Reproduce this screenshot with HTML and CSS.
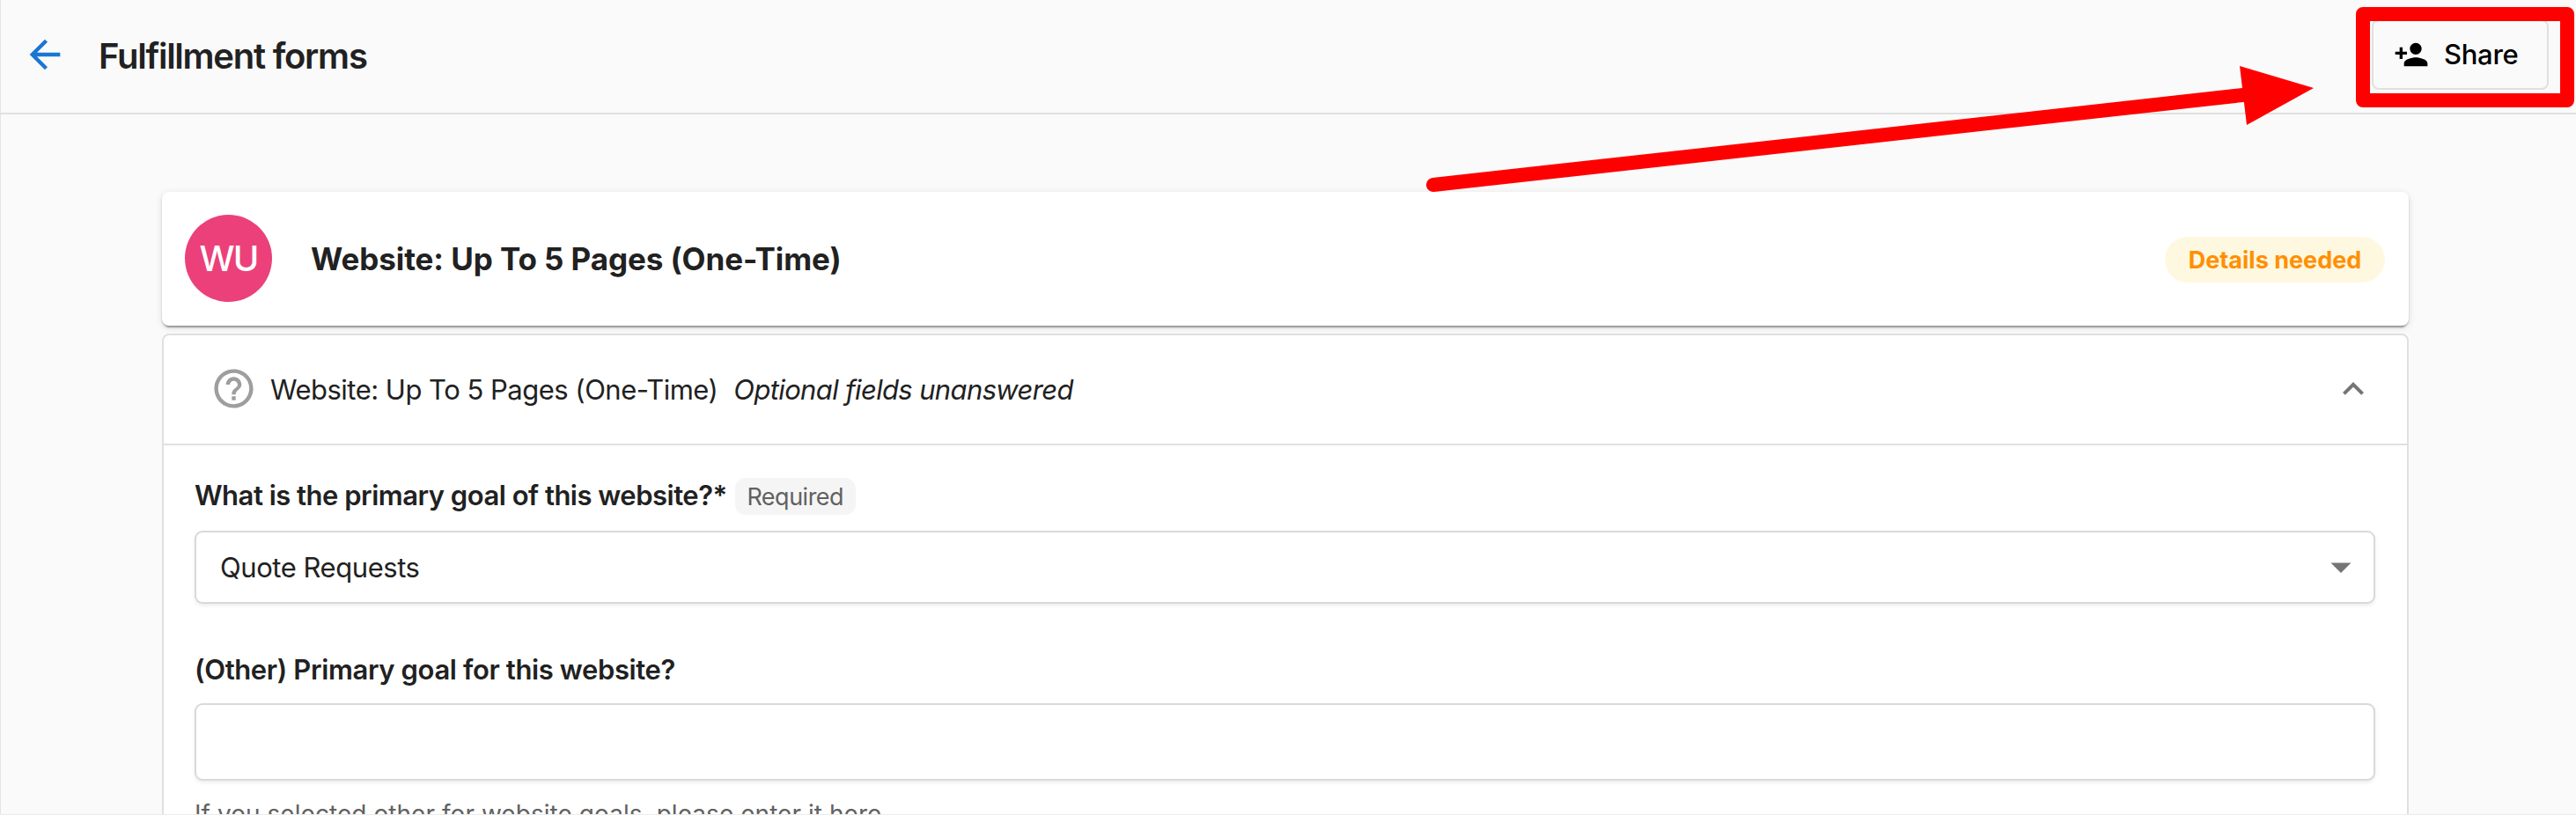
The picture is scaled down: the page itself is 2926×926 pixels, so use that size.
FILE: index.html
```html
<!DOCTYPE html>
<html lang="en">
<head>
<meta charset="utf-8">
<title>Fulfillment forms</title>
<link rel="stylesheet" href="styles.css">
</head>
<body>
<div class="page">
  <header class="toolbar">
    <svg class="back" viewBox="0 0 24 24"><path d="M20 11H7.83l5.59-5.59L12 4l-8 8 8 8 1.41-1.41L7.83 13H20v-2z"/></svg>
    <h1 class="heading">Fulfillment forms</h1>
    <button class="share">
      <svg class="share-icon" viewBox="0 0 24 24"><path d="M15 12c2.21 0 4-1.79 4-4s-1.79-4-4-4-4 1.79-4 4 1.79 4 4 4zm-9-2V7H4v3H1v2h3v3h2v-3h3v-2H6zm9 4c-2.67 0-8 1.34-8 4v2h16v-2c0-2.66-5.33-4-8-4z"/></svg>
      <span class="share-text">Share</span>
    </button>
  </header>
  <main class="content">
    <section class="card">
      <div class="avatar"><span class="initials">WU</span></div>
      <h2 class="product">Website: Up To 5 Pages (One-Time)</h2>
      <div class="status"><span class="status-text">Details needed</span></div>
    </section>
    <section class="panel">
      <div class="panel-head">
        <svg class="help" viewBox="0 0 24 24"><path d="M11 18h2v-2h-2v2zm1-16C6.48 2 2 6.48 2 12s4.480 10 10 10 10-4.480 10-10S17.520 2 12 2zm0 18c-4.410 0-8-3.590-8-8s3.590-8 8-8 8 3.590 8 8-3.590 8-8 8zm0-14c-2.210 0-4 1.790-4 4h2c0-1.100.9-2 2-2s2 .9 2 2c0 2-3 1.750-3 5h2c0-2.250 3-2.500 3-5 0-2.210-1.790-4-4-4z"/></svg>
        <span class="panel-title">Website: Up To 5 Pages (One-Time)</span>
        <em class="panel-note">Optional fields unanswered</em>
        <svg class="chevron" viewBox="0 0 24 24"><path d="M12 8l-6 6 1.410 1.410L12 10.830l4.590 4.580L18 14z"/></svg>
      </div>
      <div class="form">
        <div class="label-row">
          <label class="label label-goal">What is the primary goal of this website?*</label>
          <span class="required"><span class="required-text">Required</span></span>
        </div>
        <div class="field select">
          <span class="value">Quote Requests</span>
          <svg class="caret" viewBox="0 0 24 12"><path d="M.5.5h23L12 12z"/></svg>
        </div>
        <div class="label-row second">
          <label class="label label-other">(Other) Primary goal for this website?</label>
        </div>
        <div class="field input"></div>
        <p class="hint">If you selected other for website goals, please enter it here.</p>
      </div>
    </section>
  </main>
  <svg class="callout" viewBox="0 0 2926 926">
    <path class="callout-line" d="M1628 210L2550 107.700"/>
    <path class="callout-head" d="M2544 75L2628 100L2552 142z"/>
    <rect class="callout-box" x="2684" y="16" width="232" height="98"/>
  </svg>
</div>
</body>
</html>
```
FILE: styles.css
```css
* { box-sizing: border-box; }
body {
  margin: 0;
  background: #fafafa;
  color: #212121;
  font-family: Inter, "Liberation Sans", sans-serif;
}
.page {
  position: relative;
  height: 926px;
  overflow: hidden;
  box-shadow: inset 1px 0 #e4e4e4;
}
.page::after {
  content: "";
  position: absolute;
  left: 0;
  right: 0;
  bottom: 0;
  height: 1px;
  background: #ececec;
}
.toolbar {
  display: flex;
  align-items: center;
  height: 130px;
  padding: 0 31px 4px 25px;
  border-bottom: 2px solid #e0e0e0;
}
.back { width: 52px; height: 52px; fill: #1976d2; }
.heading {
  margin: 4px 0 0 35px;
  font-size: 40px;
  line-height: 48px;
  font-weight: 600;
  letter-spacing: -1.25px;
}
.share {
  display: flex;
  align-items: center;
  width: 201px;
  height: 80px;
  margin: 0 0 0 auto;
  padding: 0 0 0 23px;
  background: #fafafa;
  border: 2px solid #e0e0e0;
  border-radius: 8px;
  color: #000;
  font: 500 31px/40px Inter, "Liberation Sans", sans-serif;
}
.share-icon { width: 40px; height: 40px; }
.share-text { margin-left: 17px; letter-spacing: -0.3px; white-space: nowrap; }
.content { padding: 88px 190px 0 184px; }
.card {
  display: flex;
  align-items: center;
  height: 152px;
  padding: 0 27px 0 26px;
  background: #fff;
  border-radius: 8px;
  box-shadow: 0 6px 2px -4px rgba(0,0,0,.2), 0 2px 2px rgba(0,0,0,.2), 0 2px 8px rgba(0,0,0,.12);
}
.avatar {
  display: flex;
  align-items: center;
  justify-content: center;
  width: 99px;
  height: 99px;
  margin-top: -2px;
  border-radius: 50%;
  background: #ec407a;
  color: #fff;
  font-size: 40px;
  font-weight: 450;
}
.initials { letter-spacing: -1.8px; }
.product {
  margin: 0 0 0 44px;
  font-size: 35px;
  line-height: 44px;
  font-weight: 700;
  letter-spacing: -0.08px;
}
.status {
  display: flex;
  align-items: center;
  justify-content: center;
  width: 250px;
  height: 52px;
  margin: 2px 0 0 auto;
  border-radius: 26px;
  background: #fff8e1;
  color: #ff8f00;
  font-size: 27px;
  font-weight: 700;
}
.panel {
  height: 620px;
  margin-top: 9px;
  background: #fff;
  border: 2px solid #e0e0e0;
  border-radius: 8px;
}
.panel-head {
  display: flex;
  align-items: center;
  height: 125px;
  padding: 0 37px 2px 53px;
  border-bottom: 2px solid #e0e0e0;
  font-size: 31px;
  line-height: 40px;
}
.help { width: 53px; height: 53px; fill: #9e9e9e; }
.panel-title { margin: 3px 0 0 15px; letter-spacing: -0.51px; white-space: nowrap; }
.panel-note { margin: 3px 0 0 18px; letter-spacing: -0.64px; white-space: nowrap; }
.chevron { width: 48px; height: 48px; margin-left: auto; fill: #757575; }
.form { padding: 37px 36px 0 35px; }
.label-row { display: flex; align-items: center; height: 42px; }
.label {
  margin-top: -2px;
  font-size: 31px;
  line-height: 40px;
  font-weight: 600;
  white-space: nowrap;
}
.label-goal { letter-spacing: -0.5px; }
.label-other { letter-spacing: -0.38px; }
.required {
  display: flex;
  align-items: center;
  justify-content: center;
  width: 137px;
  height: 42px;
  margin-left: 9px;
  border-radius: 12px;
  background: #f5f5f5;
  color: #616161;
  font-size: 27px;
  letter-spacing: -0.5px;
}
.field {
  border: 2px solid #d9d9d9;
  border-radius: 9px;
  background: #fff;
  box-shadow: 0 2px 4px rgba(0,0,0,.08);
}
.select {
  display: flex;
  align-items: center;
  justify-content: space-between;
  height: 83px;
  margin-top: 18px;
  padding: 0 25px 0 27px;
  font-size: 31px;
  letter-spacing: -0.45px;
}
.caret { width: 24px; height: 12px; fill: #757575; }
.second { margin-top: 55px; }
.input { height: 88px; margin-top: 16px; }
.hint {
  margin: 20px 0 0;
  color: #616161;
  font-size: 28px;
  line-height: 36px;
  letter-spacing: 0.05px;
  white-space: nowrap;
}
.callout {
  position: absolute;
  left: 0;
  top: 0;
  width: 2926px;
  height: 926px;
  pointer-events: none;
}
.callout-line { stroke: #f00; stroke-width: 16px; stroke-linecap: round; fill: none; }
.callout-head { fill: #f00; }
.callout-box { fill: none; stroke: #f00; stroke-width: 16px; stroke-linejoin: round; }
```
